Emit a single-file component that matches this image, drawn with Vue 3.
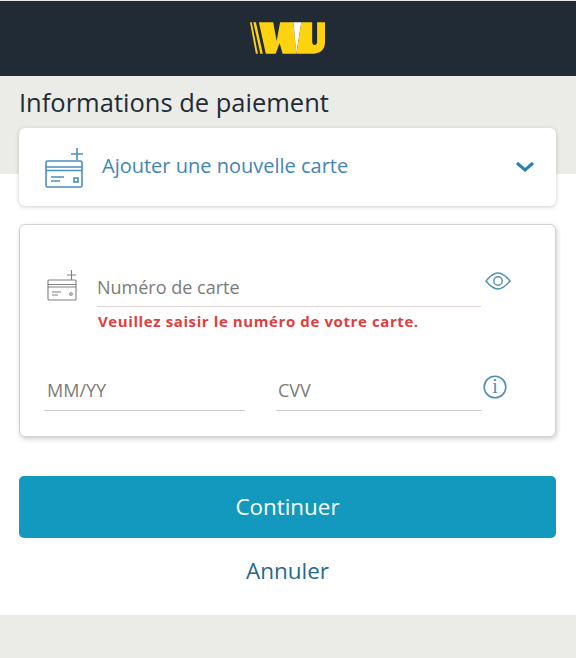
<template>
  <div class="page">
    <header class="topbar">
      <svg class="logo" width="75" height="32" viewBox="0 0 76 32">
        <polygon points="0,0 1.800,0 8,32 6,32" fill="#fdd20e" />
        <polygon points="3.300,0 6,0 13,32 10.500,32" fill="#fdd20e" />
        <polygon points="9,0 23.500,0 27,19 30.500,0 44,0 47,32 33,32 30,21 26,32 16,32" fill="#fdd20e" />
        <polygon points="44,0 52,0 47,32" fill="#fff" />
        <path d="M52 0H63V19Q63 23 65.500 23Q68 23 68 19V0H76V20C76 28 71 32 62 32H47Z" fill="#fdd20e" />
      </svg>
    </header>

    <main class="content">
      <h1 class="title">Informations de paiement</h1>

      <section class="add-card">
        <svg class="add-icon" width="40" height="42" viewBox="0 0 40 42" fill="none" stroke="#4a90c0" stroke-width="1.6">
          <rect x="1" y="15" width="36" height="26" rx="1.5" />
          <path d="M1 21h36M1 24.500h36" />
          <path d="M26 8h12M32 2v12" />
          <path d="M6 31h13M6 35h9" />
          <rect x="29" y="32" width="4" height="4" />
        </svg>
        <span class="add-label">Ajouter une nouvelle carte</span>
        <svg class="chevron" width="20" height="12" viewBox="0 0 20 12" fill="none" stroke="#2a80b0" stroke-width="3">
          <path d="M2 2l8 7 8-7" />
        </svg>
      </section>

      <form class="form-card" @submit.prevent>
        <div class="number-row">
          <svg class="card-icon" width="30" height="32" viewBox="0 0 30 32" fill="none" stroke="#808080" stroke-width="1.1">
            <rect x="1" y="11" width="28" height="20" rx="1" />
            <path d="M1 15.500h28M1 18h28" />
            <path d="M20 6h9M24.500 1v10" />
            <path d="M5 23h9M5 26h6" />
            <circle cx="24" cy="25" r="1.300" />
          </svg>
          <div class="number-field">
            <div class="field field-error">Numéro de carte</div>
            <p class="error">Veuillez saisir le numéro de votre carte.</p>
          </div>
          <svg class="eye" width="26" height="18" viewBox="0 0 26 18" fill="none" stroke="#4f8fb3" stroke-width="1.4">
            <path d="M1 9c4-5 8-8 12-8s8 3 12 8c-4 5-8 8-12 8S5 14 1 9z" />
            <circle cx="13" cy="9" r="4.200" />
          </svg>
        </div>

        <div class="meta-row">
          <div class="field date">MM/YY</div>
          <div class="field cvv">CVV</div>
          <svg class="info" width="24" height="24" viewBox="0 0 24 24">
            <circle cx="12" cy="12" r="10.800" fill="none" stroke="#4f8fb3" stroke-width="1.6" />
            <text x="12" y="18" text-anchor="middle" class="info-i">i</text>
          </svg>
        </div>
      </form>

      <button class="continue" type="button">Continuer</button>
      <a class="cancel" href="#">Annuler</a>
    </main>

    <div class="footer"></div>
  </div>
</template>

<script setup>
</script>

<style scoped>
.page {
  width: 576px;
  height: 658px;
  display: flex;
  flex-direction: column;
  font-family: "Open Sans", sans-serif;
  background: #ebebe8;
  overflow: hidden;
}

.topbar {
  height: 76px;
  flex: none;
  box-sizing: border-box;
  background: #212b36;
  border-top: 1px solid #e8e8e8;
  display: flex;
  justify-content: center;
  padding: 21px 1px 0 0;
}
.logo {
  display: block;
}

.content {
  flex: none;
  height: 539px;
  box-sizing: border-box;
  padding: 0 20px 0 19px;
  background: linear-gradient(#ebebe8 98px, #fff 98px);
}

.title {
  margin: 0;
  height: 52px;
  font-size: 25.500px;
  line-height: 52px;
  font-weight: 400;
  color: #212b36;
}

.add-card {
  height: 78px;
  box-sizing: border-box;
  display: flex;
  align-items: center;
  padding: 0 21px 0 26px;
  background: #fff;
  border-radius: 6px;
  box-shadow: 0 1px 4px rgba(0, 0, 0, 0.2);
}
.add-icon {
  flex: none;
  margin-top: -1px;
  margin-right: 17px;
}
.add-label {
  flex: 1;
  font-size: 20px;
  line-height: 24px;
  margin-bottom: 3px;
  color: #3f86b4;
}

.form-card {
  height: 213px;
  margin-top: 18px;
  box-sizing: border-box;
  padding: 42px 0 0 24px;
  background: #fff;
  border: 1px solid #d2d2d2;
  border-radius: 6px;
  box-shadow: 1px 2px 5px rgba(0, 0, 0, 0.2);
}

.number-row {
  display: flex;
  align-items: flex-start;
}
.card-icon {
  flex: none;
  margin: 2px 20px 0 3px;
}
.number-field {
  width: 384px;
}
.eye {
  flex: none;
  margin: 5px 0 0 4px;
}

.field {
  box-sizing: border-box;
  height: 40px;
  line-height: 40px;
  font-size: 18px;
  color: #7b7b7b;
  border-bottom: 1px solid #cfcfcf;
}
.field-error {
  border-bottom-color: #e3d5d5;
}

.error {
  margin: 4px 0 0 1px;
  font-size: 15px;
  line-height: 20px;
  font-weight: 700;
  letter-spacing: 0.6px;
  color: #e03e3e;
}

.meta-row {
  display: flex;
  align-items: flex-start;
  margin-top: 39px;
}
.date {
  width: 201px;
  height: 41px;
  padding-left: 3px;
}
.cvv {
  width: 206px;
  height: 41px;
  margin-left: 31px;
  padding-left: 2px;
}
.info {
  flex: none;
  margin: 5px 0 0 1px;
}
.info-i {
  font-family: "Liberation Serif", serif;
  font-size: 20px;
  fill: #4f8fb3;
}

.continue {
  display: block;
  width: 100%;
  height: 62px;
  margin-top: 39px;
  padding: 0 0 2px;
  border: none;
  border-radius: 5px;
  background: #1299bd;
  color: #fff;
  font-family: inherit;
  font-size: 22.400px;
}

.cancel {
  display: block;
  margin-top: 15px;
  text-align: center;
  font-size: 22.500px;
  line-height: 36px;
  color: #236a8f;
  text-decoration: none;
}

.footer {
  flex: 1;
  background: #ebebe8;
}
</style>
